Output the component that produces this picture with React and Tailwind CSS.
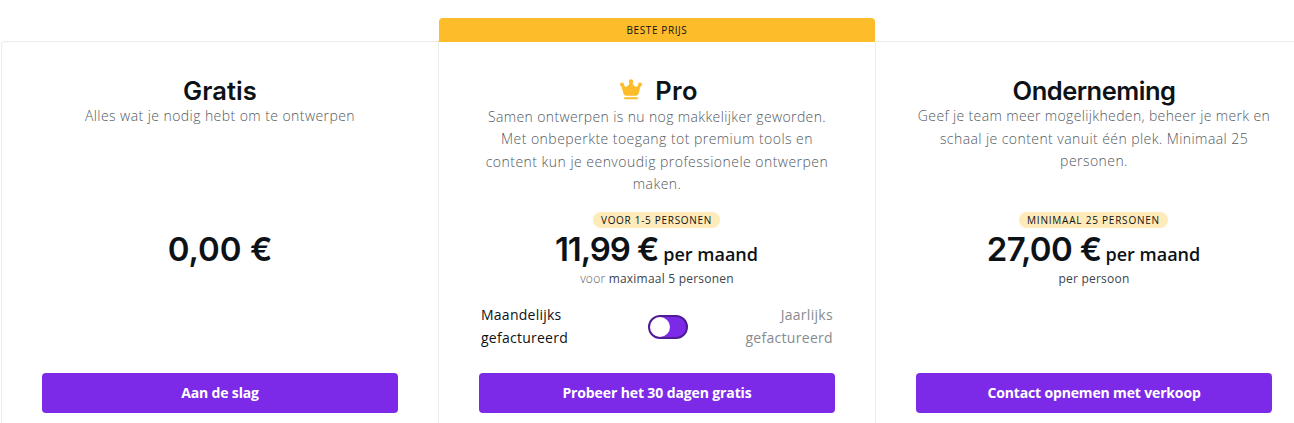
const sans = "font-['Open_Sans','Noto_Sans',sans-serif]";

function Crown() {
  return (
    <svg className="-mt-[3px] shrink-0" width="22" height="22" viewBox="0 0 22 22" fill="#fdbc29" aria-hidden="true">
      <circle cx="2" cy="5.6" r="2" />
      <circle cx="11" cy="2.4" r="2.2" />
      <circle cx="20" cy="5.6" r="2" />
      <path d="M1.3 6.6L3.5 5.6C4.2 7.4 5.8 8.2 7 7.4C8.6 6.3 9.4 5 9.8 3.5H12.2C12.6 5 13.4 6.3 15 7.4C16.2 8.2 17.8 7.4 18.5 5.6L20.7 6.6L18.7 14.2Q18 16.7 15.8 16.7H6.2Q4 16.7 3.3 14.2Z" />
      <rect x="4" y="18.3" width="14" height="2" rx="1" />
    </svg>
  );
}

function Card({ first, title, titleClass, icon, lines, badge, price, priceClass, period, note, billing, action, actionClass }) {
  return (
    <section
      className={`flex h-[382px] w-[437px] shrink-0 flex-col border-l border-t border-[#ebecee] px-10 text-center ${first ? 'rounded-tl' : ''} ${icon ? 'border-t-[#fdbc29]' : ''}`}
    >
      <h2 className={`mt-[32px] flex h-[34px] items-center justify-center whitespace-nowrap text-[25.5px] font-[570] text-[#0d1216] font-['Inter',sans-serif] ${titleClass}`}>
        {icon}
        {title}
      </h2>
      <div className="h-24 text-[14px] font-light leading-[22.4px] text-[#535960]">
        <div className={icon ? 'mt-[-2px]' : 'mt-[-2.6px]'}>
          {lines.map((l) => (
            <p key={l.text} className={`flex justify-center whitespace-nowrap ${l.cls}`}>{l.text}</p>
          ))}
        </div>
      </div>
      <div className="mt-[8px] flex h-4 justify-center">
        {badge && (
          <span className={`-ml-0.5 flex h-4 items-center justify-center whitespace-nowrap rounded-full bg-[#ffebb9] pl-px text-[10px] font-medium text-[#0d1216] ${badge.cls}`}>{badge.text}</span>
        )}
      </div>
      <div className="flex h-[42px] items-baseline justify-center whitespace-nowrap text-[#0d1216]">
        <span className={`text-[33px] font-semibold leading-[42px] font-['Inter',sans-serif] ${priceClass}`}>{price}</span>
        {period && <span className="mr-px text-[18px] font-semibold">{period}</span>}
      </div>
      <p className="h-[18px] whitespace-nowrap text-[12px] leading-[18px] tracking-[0.22px] text-[#3d444b]">{note}</p>
      <div className="mt-[15px] h-[46px]">{billing}</div>
      <button className={`mt-[24px] flex h-10 w-full shrink-0 items-center justify-center whitespace-nowrap rounded bg-[#7d2ae8] pb-0.5 text-[14px] font-bold text-white ${actionClass}`}>
        {action}
      </button>
    </section>
  );
}

function Billing() {
  return (
    <div className="flex items-center justify-between px-0.5 text-[14px] leading-[23px]">
      <p className="w-[110px] text-left font-[370] tracking-[0.25px] text-[#0d1216]">Maandelijks gefactureerd</p>
      <span role="switch" aria-checked="false" className="ml-[21px] mt-[1px] flex h-6 w-10 rounded-full border-2 border-[#4f1c94] bg-[#7d2ae8]">
        <span className="h-5 w-5 rounded-full bg-white" />
      </span>
      <p className="w-[110px] text-right font-[370] tracking-[0.3px] text-[#868b90]">Jaarlijks gefactureerd</p>
    </div>
  );
}

export default function App() {
  return (
    <main className={`h-[423px] w-full overflow-hidden bg-white pl-px ${sans}`}>
      <div className="flex h-[41px] items-end">
        <div className="ml-[438px] flex h-[23px] w-[436px] items-center justify-center rounded-t bg-[#fdbc29] pt-[2px] text-[10px] font-medium tracking-[0.6px] text-[#0d1216]">
          BESTE PRIJS
        </div>
      </div>
      <div className="flex">
        <Card
          first
          title="Gratis"
          titleClass="tracking-[0.1px]"
          lines={[{ text: 'Alles wat je nodig hebt om te ontwerpen', cls: 'tracking-[0.43px]' }]}
          price="0,00 €"
          priceClass=""
          action="Aan de slag"
          actionClass="tracking-[-0.15px]"
        />
        <Card
          icon={<Crown />}
          title="Pro"
          titleClass="gap-[13px] pl-[4px] tracking-[0.4px]"
          lines={[
            { text: 'Samen ontwerpen is nu nog makkelijker geworden.', cls: 'tracking-[0.37px]' },
            { text: 'Met onbeperkte toegang tot premium tools en', cls: 'tracking-[0.46px]' },
            { text: 'content kun je eenvoudig professionele ontwerpen', cls: 'tracking-[0.47px]' },
            { text: 'maken.', cls: 'tracking-[0.45px]' },
          ]}
          badge={{ text: 'VOOR 1-5 PERSONEN', cls: 'w-[127px] tracking-[0.7px]' }}
          price="11,99 €"
          priceClass="mr-[5px] tracking-[-1.1px]"
          period="per maand"
          note={<><span className="font-light text-[#5a6068]">voor </span><span className="font-medium">maximaal 5 personen</span></>}
          billing={<Billing />}
          action="Probeer het 30 dagen gratis"
          actionClass="tracking-[-0.12px]"
        />
        <Card
          title="Onderneming"
          titleClass="tracking-[-0.5px]"
          lines={[
            { text: 'Geef je team meer mogelijkheden, beheer je merk en', cls: 'tracking-[0.36px]' },
            { text: 'schaal je content vanuit één plek. Minimaal 25', cls: 'tracking-[0.43px]' },
            { text: 'personen.', cls: 'tracking-[0.45px]' },
          ]}
          badge={{ text: 'MINIMAAL 25 PERSONEN', cls: 'w-[149px] tracking-[0.78px]' }}
          price="27,00 €"
          priceClass="mr-1 tracking-[-0.65px]"
          period="per maand"
          note={<span className="font-medium">per persoon</span>}
          action="Contact opnemen met verkoop"
          actionClass="tracking-[-0.15px]"
        />
      </div>
    </main>
  );
}
